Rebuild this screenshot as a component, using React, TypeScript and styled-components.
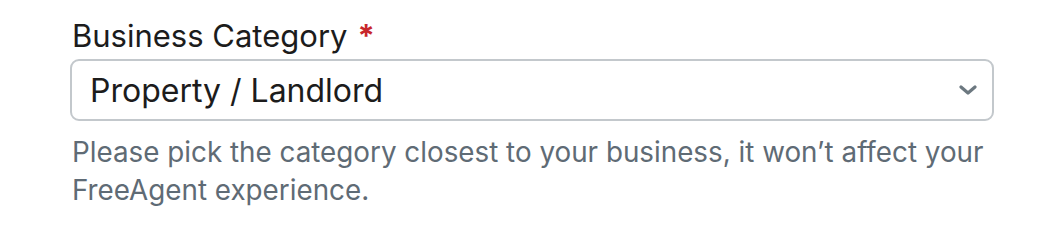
import styled, { createGlobalStyle } from "styled-components";

const GlobalStyle = createGlobalStyle`
  body {
    margin: 0;
    background: #ffffff;
    font-family: Inter, "Noto Sans", sans-serif;
  }
`;

const Field = styled.div`
  width: 924px;
  padding: 17px 0 0 70px;
`;

const Label = styled.label`
  display: block;
  font-size: 31px;
  line-height: 38px;
  color: #1c1c1c;
  margin-bottom: 4px;
  margin-left: 2px;
`;

const Required = styled.span`
  color: #c8262b;
  font-weight: 700;
  margin-left: 10px;
`;

const SelectBox = styled.div`
  box-sizing: border-box;
  height: 62px;
  border: 2px solid #c3c8cc;
  border-radius: 9px;
  display: flex;
  align-items: center;
  justify-content: space-between;
  padding: 0 15px 0 18px;
`;

const SelectValue = styled.span`
  font-size: 32px;
  color: #1c1c1c;
`;

const Chevron = styled.svg`
  width: 18px;
  height: 10px;
  color: #6c7880;
`;

const Help = styled.p`
  margin: 12px 0 0 2px;
  font-size: 27.8px;
  line-height: 38px;
  color: #5f6b75;
`;

export default function App() {
  return (
    <>
      <GlobalStyle />
      <Field>
        <Label>
          Business Category<Required>*</Required>
        </Label>
        <SelectBox>
          <SelectValue>Property / Landlord</SelectValue>
          <Chevron viewBox="0 0 18 10">
            <path
              d="M2 2 L9 8 L16 2"
              fill="none"
              stroke="currentColor"
              strokeWidth="3.2"
              strokeLinecap="round"
              strokeLinejoin="round"
            />
          </Chevron>
        </SelectBox>
        <Help>
          Please pick the category closest to your business, it won’t affect
          your FreeAgent experience.
        </Help>
      </Field>
    </>
  );
}
